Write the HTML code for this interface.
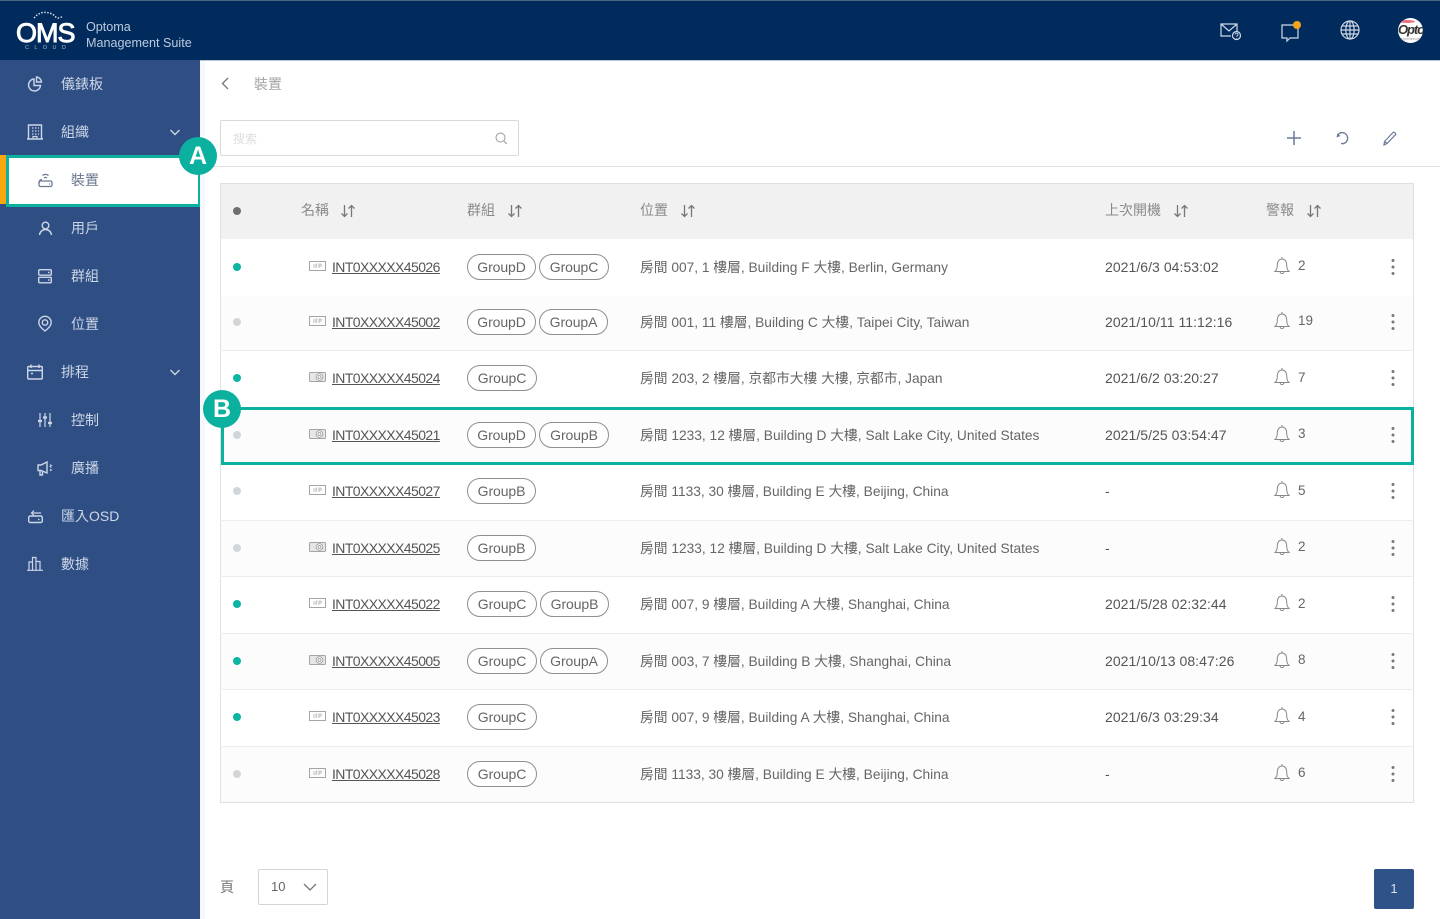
<!DOCTYPE html>
<html lang="zh-Hant"><head><meta charset="utf-8"><title>OMS</title>
<style>
*{box-sizing:border-box}
html,body{margin:0;padding:0;width:1440px;height:919px;overflow:hidden;background:#fff;font-family:"Liberation Sans","Noto Sans CJK TC",sans-serif;color:#555}
div,span,svg,a{position:absolute;white-space:nowrap}
svg{overflow:visible;fill:none}
.nav{color:#cdd6e6;font-size:14px;line-height:20px;height:20px;letter-spacing:0}
.ic{stroke:#cdd6e6;stroke-width:1.4;fill:none}
.h{font-size:14px;line-height:20px;color:#8a8a8a;top:200px}
.sep{left:220px;width:1194px;height:1px;background:#eceeee}
.d{width:8px;height:8px;border-radius:50%;left:233px}
.on{background:#0db5a5}.off{background:#d3d6d8}
.n{left:332px;font-size:14px;line-height:20px;color:#555;text-decoration:underline;letter-spacing:-.58px}
.p{height:26px;border:1px solid #8f8f8f;border-radius:13px;font-size:14px;line-height:24px;text-align:center;color:#666;background:#fff;letter-spacing:-.1px}
.l{left:640px;font-size:13.75px;line-height:20px;color:#666;margin-top:1px}
.t{left:1105px;font-size:14px;line-height:20px;color:#555;letter-spacing:.05px}
.c{left:1298px;font-size:13.5px;line-height:20px;color:#666;margin-top:1px}
.b{left:1274px;width:16px;height:18px;stroke:#888;stroke-width:1;margin-top:-1px}
.k{left:1391px;width:4px;height:18px}
.i{left:309px;width:17px;height:10px}
.so{width:16px;height:14px;stroke:#777;stroke-width:1.3;top:204px}
.badge{width:38px;height:38px;border-radius:50%;background:#0bb09f;color:#fff;font-size:25px;font-weight:bold;line-height:38px;text-align:center}
</style></head><body>
<svg width="0" height="0" style="left:0;top:0"><defs>
<symbol id="bell" viewBox="0 0 16 18"><path d="M8 0v2M1 14.500c1.800-1.500 2.300-3.500 2.300-6.500 0-3.500 1.800-6 4.700-6s4.700 2.500 4.700 6c0 3 .5 5 2.300 6.500zM6 14.500c.3 2.700 3.700 2.700 4 0" fill="none"/></symbol>
<symbol id="dots" viewBox="0 0 4 18"><circle cx="2" cy="2.500" r="1.500" fill="#777"/><circle cx="2" cy="9" r="1.500" fill="#777"/><circle cx="2" cy="15.500" r="1.500" fill="#777"/></symbol>
<symbol id="ifp" viewBox="0 0 17 10"><rect x=".5" y=".5" width="16" height="9" fill="none" stroke="#a5a5a5"/><path d="M5 3v4M7 3v4M7 3h1.500M7 5h1.300M10 3v4M10 3h1.200a1 1 0 0 1 0 2.200H10" fill="none" stroke="#a5a5a5" stroke-width=".7"/></symbol>
<symbol id="cam" viewBox="0 0 17 10"><rect x=".5" y=".5" width="16" height="9" rx="1" fill="#e6e6e6" stroke="#a5a5a5"/><circle cx="10.500" cy="5" r="3.400" fill="#f6f6f6" stroke="#999" stroke-width=".8"/><circle cx="10.500" cy="5" r="1.500" fill="none" stroke="#999" stroke-width=".8"/></symbol>
<symbol id="sort" viewBox="0 0 16 14"><path d="M4.500 1v11.500M1.500 9.500l3 3 3-3M11.500 13V1.500M8.500 4.500l3-3 3 3" fill="none"/></symbol>
</defs></svg>

<!-- header -->
<div style="left:0;top:0;width:1440px;height:60px;background:#012b5d;border-top:1px solid #4c6583"></div>
<div style="left:16px;top:18px;color:#fff;font-size:27px;letter-spacing:-1px;line-height:30px;-webkit-text-stroke:.9px #fff">OMS</div>
<svg style="left:33px;top:11px" width="32" height="11"><path d="M1 7C6 1 12 0 19 3c3 1.500 4 4 6 4 1.500 0 3-.5 4-1.500" stroke="#d8dfe9" stroke-width="1.500" stroke-dasharray="1.500 1.500"/></svg>
<div style="left:25px;top:45px;color:#a9bad0;font-size:5.500px;line-height:7px;letter-spacing:5.400px">CLOUD</div>
<div style="left:86px;top:19px;color:#bdcade;font-size:12.600px;line-height:16px">Optoma<br>Management Suite</div>
<svg style="left:1220px;top:22px" width="23" height="20" stroke="#cfd9e6" stroke-width="1.200"><path d="M11 14H1V2h16v7M1 2l8 7 8-7"/><circle cx="16.500" cy="13.500" r="4" fill="#012b5d"/><path d="M15 12.500a1.500 1.500 0 1 1 2 1.500l-.5.800M16.500 16v.4" stroke-width=".9"/></svg>
<svg style="left:1281px;top:22px" width="22" height="20" stroke="#cfd9e6" stroke-width="1.200"><path d="M1 3h16v13h-8l-3 3v-3H1z"/><circle cx="16" cy="3" r="4" fill="#f5a316" stroke="none"/></svg>
<svg style="left:1340px;top:20px" width="20" height="20" stroke="#cfd9e6" stroke-width="1.200"><circle cx="10" cy="10" r="9"/><ellipse cx="10" cy="10" rx="4.200" ry="9"/><path d="M10 1v18M1 10h18M2.200 6h15.600M2.200 14h15.600"/></svg>
<div style="left:1398px;top:18px;width:25px;height:25px;border-radius:50%;background:#fff;overflow:hidden">
<div style="left:1px;top:2px;width:16px;height:3px;background:#e8707e;border-radius:50%"></div>
<div style="left:0;top:4px;color:#333;font-size:13px;font-weight:bold;font-style:italic;line-height:15px;letter-spacing:-1.100px">Optoma</div>
<div style="left:2px;top:18px;color:#999;font-size:4px;line-height:5px">experience</div></div>

<!-- sidebar -->
<div style="left:0;top:60px;width:200px;height:859px;background:#2f4f84"></div>
<svg class="ic" style="left:27px;top:76px" width="16" height="16"><path d="M7 3a6 6 0 1 0 6.500 6.500H7z"/><path d="M9.500 1a5.500 5.500 0 0 1 5 5h-5z"/></svg>
<div class="nav" style="left:61px;top:74px">儀錶板</div>
<svg class="ic" style="left:27px;top:124px" width="16" height="16"><path d="M1.500 1h13v14h-13zM0 15h16"/><path d="M5 4h1.500M8 4h1.500M11 4h1M5 7h1.500M8 7h1.500M11 7h1M5 10h1.500M8 10h1.500M11 10h1M6 15v-2.500h4V15" stroke-width="1.200"/></svg>
<div class="nav" style="left:61px;top:122px">組織</div>
<svg class="ic" style="left:170px;top:129px" width="10" height="7" stroke-width="1.500"><path d="M.500 1l4.500 4.500L9.500 1"/></svg>

<div style="left:0;top:155px;width:6px;height:49px;background:#f8a70c"></div>
<div style="left:6px;top:155px;width:194px;height:52px;background:#fff;border:3px solid #0bb09f;border-right-width:2px"></div>
<svg style="left:38px;top:172px;stroke:#6a7a96;stroke-width:1.300" width="15" height="16"><path d="M4.500 3.500c1.500-1.500 4.500-1.500 6 0M6 6c.8-.8 2.200-.8 3 0"/><rect x="1" y="9" width="13" height="5.500" rx="1.500"/><path d="M1 11.500c0-3 1-4 3-4M11 12h1" /></svg>
<div class="nav" style="left:71px;top:170px;color:#68758c">裝置</div>

<svg class="ic" style="left:38px;top:221px" width="15" height="15"><circle cx="7.500" cy="4.500" r="3.300"/><path d="M1.500 14c.5-3.500 3-5.500 6-5.500s5.500 2 6 5.500"/></svg>
<div class="nav" style="left:71px;top:218px">用戶</div>
<svg class="ic" style="left:38px;top:269px" width="14" height="15"><rect x=".7" y=".7" width="12.600" height="5.500" rx="1"/><rect x=".7" y="8.300" width="12.600" height="5.500" rx="1"/><path d="M10 3.500h1.500M10 11h1.500"/></svg>
<div class="nav" style="left:71px;top:266px">群組</div>
<svg class="ic" style="left:38px;top:316px" width="14" height="16"><path d="M7 15C3 12 .8 9.500.8 6.500a6.200 6.200 0 0 1 12.400 0C13.200 9.500 11 12 7 15z"/><circle cx="7" cy="6.500" r="2.700"/></svg>
<div class="nav" style="left:71px;top:314px">位置</div>
<svg class="ic" style="left:27px;top:364px" width="16" height="16"><rect x=".7" y="2.500" width="14.600" height="12.500" rx="1"/><path d="M.7 6.500h14.600M4 .5v3.500M12 .5v3.500M4 9.500h2"/></svg>
<div class="nav" style="left:61px;top:362px">排程</div>
<svg class="ic" style="left:170px;top:369px" width="10" height="7" stroke-width="1.500"><path d="M.500 1l4.500 4.500L9.500 1"/></svg>
<svg class="ic" style="left:38px;top:413px" width="14" height="14"><path d="M2 0v14M7 0v14M12 0v14" stroke-width="1.200"/><path d="M0 8h4M5 4.500h4M10 10h4" stroke-width="2.200"/></svg>
<div class="nav" style="left:71px;top:410px">控制</div>
<svg class="ic" style="left:37px;top:461px" width="18" height="15"><path d="M1 4h3l6-3v11L4 9.500H1zM3 9.500V14h2.500V10.500"/><path d="M13 3.500l1.500 1-1.500 1 1.500 1M13 8l1.500 1-1.500 1" stroke-width="1"/></svg>
<div class="nav" style="left:71px;top:458px">廣播</div>
<svg class="ic" style="left:28px;top:509px" width="15" height="15"><rect x=".7" y="7" width="13.600" height="6.500" rx="1.500"/><path d="M4 4h9M6 1.500L3.500 4 6 6.500M10 10.500h1.500" stroke-width="1.200"/></svg>
<div class="nav" style="left:61px;top:506px">匯入OSD</div>
<svg class="ic" style="left:27px;top:556px" width="16" height="15"><path d="M0 14.300h16M2 14V6h3.500v8M5.500 14V1.500H9V14M9 14V5.500h4V14" stroke-width="1.200"/></svg>
<div class="nav" style="left:61px;top:554px">數據</div>

<!-- content top -->
<div style="left:200px;top:60px;width:5px;height:859px;background:#f6f8fe"></div>
<div style="left:200px;top:60px;width:1240px;height:1px;background:#b9c6d3"></div>
<svg style="left:221px;top:77px;stroke:#777;stroke-width:1.300" width="8" height="13"><path d="M7 1L1.500 6.500 7 12"/></svg>
<div style="left:254px;top:74px;font-size:14px;line-height:20px;color:#a3a3a3">裝置</div>
<div style="left:220px;top:120px;width:299px;height:36px;border:1px solid #d9d9d9;border-radius:2px;background:#fff"></div>
<div style="left:233px;top:131px;font-size:12px;line-height:17px;color:#dedede">搜索</div>
<svg style="left:495px;top:132px;stroke:#999;stroke-width:1" width="12" height="13"><circle cx="5.500" cy="5.500" r="4.500"/><path d="M9 9l2.800 3"/></svg>
<div style="left:200px;top:166px;width:1240px;height:1px;background:#dfdfdf"></div>
<svg style="left:1287px;top:131px;stroke:#6c7b98;stroke-width:1.500" width="14" height="14"><path d="M7 0v14M0 7h14"/></svg>
<svg style="left:1335px;top:131px;stroke:#6c7b98;stroke-width:1.400" width="15" height="15"><path d="M2.800 3.800A5.500 5.500 0 1 1 6 12.500"/><path d="M1.500 6.500L2.300 2.300 5.500 5z" fill="#6c7b98" stroke="none"/></svg>
<svg style="left:1383px;top:131px;stroke:#6c7b98;stroke-width:1.200" width="14" height="15"><path d="M1.500 10.500L10 1.500c1-1 3.500 1 2.500 2.200L4 12.500l-3 1.500zM1.500 10.500l2.500 2"/></svg>

<!-- table -->
<div style="left:220px;top:183px;width:1194px;height:620px;border:1px solid #dfe1e1;background:#fff"></div>
<div style="left:221px;top:184px;width:1192px;height:55px;background:#f1f1f1"></div>
<div class="d" style="left:233px;top:207px;background:#707070"></div>
<div class="h" style="left:301px">名稱</div><svg class="so" style="left:340px"><use href="#sort" width="16" height="14"/></svg>
<div class="h" style="left:467px">群組</div><svg class="so" style="left:507px"><use href="#sort" width="16" height="14"/></svg>
<div class="h" style="left:640px">位置</div><svg class="so" style="left:680px"><use href="#sort" width="16" height="14"/></svg>
<div class="h" style="left:1105px">上次開機</div><svg class="so" style="left:1173px"><use href="#sort" width="16" height="14"/></svg>
<div class="h" style="left:1266px">警報</div><svg class="so" style="left:1306px"><use href="#sort" width="16" height="14"/></svg>

<div style="left:221px;top:296px;width:1192px;height:54px;background:#fcfcfc"></div>
<div style="left:221px;top:408px;width:1192px;height:55px;background:#fcfcfc"></div>
<div style="left:221px;top:521px;width:1192px;height:55px;background:#fcfcfc"></div>
<div style="left:221px;top:634px;width:1192px;height:55px;background:#fcfcfc"></div>
<div style="left:221px;top:747px;width:1192px;height:55px;background:#fcfcfc"></div>
<div class="sep" style="top:350px"></div><div class="sep" style="top:520px"></div><div class="sep" style="top:576px"></div><div class="sep" style="top:633px"></div><div class="sep" style="top:689px"></div><div class="sep" style="top:746px"></div>

<!-- row 1 -->
<div class="d on" style="top:263px"></div><svg class="i" style="top:261px"><use href="#ifp" width="17" height="10"/></svg><div class="n" style="top:257px">INT0XXXXX45026</div>
<div class="p" style="left:467px;top:254px;width:69px">GroupD</div><div class="p" style="left:539px;top:254px;width:70px">GroupC</div>
<div class="l" style="top:257px">房間 007, 1 樓層, Building F 大樓, Berlin, Germany</div><div class="t" style="top:257px">2021/6/3 04:53:02</div>
<svg class="b" style="top:258px"><use href="#bell" width="16" height="18"/></svg><div class="c" style="top:255px">2</div><svg class="k" style="top:258px"><use href="#dots" width="4" height="18"/></svg>
<!-- row 2 -->
<div class="d off" style="top:318px"></div><svg class="i" style="top:316px"><use href="#ifp" width="17" height="10"/></svg><div class="n" style="top:312px">INT0XXXXX45002</div>
<div class="p" style="left:467px;top:309px;width:69px">GroupD</div><div class="p" style="left:539px;top:309px;width:69px">GroupA</div>
<div class="l" style="top:312px">房間 001, 11 樓層, Building C 大樓, Taipei City, Taiwan</div><div class="t" style="top:312px">2021/10/11 11:12:16</div>
<svg class="b" style="top:313px"><use href="#bell" width="16" height="18"/></svg><div class="c" style="top:310px">19</div><svg class="k" style="top:313px"><use href="#dots" width="4" height="18"/></svg>
<!-- row 3 -->
<div class="d on" style="top:374px"></div><svg class="i" style="top:372px"><use href="#cam" width="17" height="10"/></svg><div class="n" style="top:368px">INT0XXXXX45024</div>
<div class="p" style="left:467px;top:365px;width:70px">GroupC</div>
<div class="l" style="top:368px">房間 203, 2 樓層, 京都市大樓 大樓, 京都市, Japan</div><div class="t" style="top:368px">2021/6/2 03:20:27</div>
<svg class="b" style="top:369px"><use href="#bell" width="16" height="18"/></svg><div class="c" style="top:367px">7</div><svg class="k" style="top:369px"><use href="#dots" width="4" height="18"/></svg>
<!-- row 4 -->
<div class="d off" style="top:431px"></div><svg class="i" style="top:429px"><use href="#cam" width="17" height="10"/></svg><div class="n" style="top:425px">INT0XXXXX45021</div>
<div class="p" style="left:467px;top:422px;width:69px">GroupD</div><div class="p" style="left:539px;top:422px;width:70px">GroupB</div>
<div class="l" style="top:425px">房間 1233, 12 樓層, Building D 大樓, Salt Lake City, United States</div><div class="t" style="top:425px">2021/5/25 03:54:47</div>
<svg class="b" style="top:426px"><use href="#bell" width="16" height="18"/></svg><div class="c" style="top:423px">3</div><svg class="k" style="top:426px"><use href="#dots" width="4" height="18"/></svg>
<!-- row 5 -->
<div class="d off" style="top:487px"></div><svg class="i" style="top:485px"><use href="#ifp" width="17" height="10"/></svg><div class="n" style="top:481px">INT0XXXXX45027</div>
<div class="p" style="left:467px;top:478px;width:69px">GroupB</div>
<div class="l" style="top:481px">房間 1133, 30 樓層, Building E 大樓, Beijing, China</div><div class="t" style="top:481px">-</div>
<svg class="b" style="top:482px"><use href="#bell" width="16" height="18"/></svg><div class="c" style="top:480px">5</div><svg class="k" style="top:482px"><use href="#dots" width="4" height="18"/></svg>
<!-- row 6 -->
<div class="d off" style="top:544px"></div><svg class="i" style="top:542px"><use href="#cam" width="17" height="10"/></svg><div class="n" style="top:538px">INT0XXXXX45025</div>
<div class="p" style="left:467px;top:535px;width:69px">GroupB</div>
<div class="l" style="top:538px">房間 1233, 12 樓層, Building D 大樓, Salt Lake City, United States</div><div class="t" style="top:538px">-</div>
<svg class="b" style="top:539px"><use href="#bell" width="16" height="18"/></svg><div class="c" style="top:536px">2</div><svg class="k" style="top:539px"><use href="#dots" width="4" height="18"/></svg>
<!-- row 7 -->
<div class="d on" style="top:600px"></div><svg class="i" style="top:598px"><use href="#ifp" width="17" height="10"/></svg><div class="n" style="top:594px">INT0XXXXX45022</div>
<div class="p" style="left:467px;top:591px;width:70px">GroupC</div><div class="p" style="left:540px;top:591px;width:69px">GroupB</div>
<div class="l" style="top:594px">房間 007, 9 樓層, Building A 大樓, Shanghai, China</div><div class="t" style="top:594px">2021/5/28 02:32:44</div>
<svg class="b" style="top:595px"><use href="#bell" width="16" height="18"/></svg><div class="c" style="top:593px">2</div><svg class="k" style="top:595px"><use href="#dots" width="4" height="18"/></svg>
<!-- row 8 -->
<div class="d on" style="top:657px"></div><svg class="i" style="top:655px"><use href="#cam" width="17" height="10"/></svg><div class="n" style="top:651px">INT0XXXXX45005</div>
<div class="p" style="left:467px;top:648px;width:70px">GroupC</div><div class="p" style="left:540px;top:648px;width:68px">GroupA</div>
<div class="l" style="top:651px">房間 003, 7 樓層, Building B 大樓, Shanghai, China</div><div class="t" style="top:651px">2021/10/13 08:47:26</div>
<svg class="b" style="top:652px"><use href="#bell" width="16" height="18"/></svg><div class="c" style="top:649px">8</div><svg class="k" style="top:652px"><use href="#dots" width="4" height="18"/></svg>
<!-- row 9 -->
<div class="d on" style="top:713px"></div><svg class="i" style="top:711px"><use href="#ifp" width="17" height="10"/></svg><div class="n" style="top:707px">INT0XXXXX45023</div>
<div class="p" style="left:467px;top:704px;width:70px">GroupC</div>
<div class="l" style="top:707px">房間 007, 9 樓層, Building A 大樓, Shanghai, China</div><div class="t" style="top:707px">2021/6/3 03:29:34</div>
<svg class="b" style="top:708px"><use href="#bell" width="16" height="18"/></svg><div class="c" style="top:706px">4</div><svg class="k" style="top:708px"><use href="#dots" width="4" height="18"/></svg>
<!-- row 10 -->
<div class="d off" style="top:770px"></div><svg class="i" style="top:768px"><use href="#ifp" width="17" height="10"/></svg><div class="n" style="top:764px">INT0XXXXX45028</div>
<div class="p" style="left:467px;top:761px;width:70px">GroupC</div>
<div class="l" style="top:764px">房間 1133, 30 樓層, Building E 大樓, Beijing, China</div><div class="t" style="top:764px">-</div>
<svg class="b" style="top:765px"><use href="#bell" width="16" height="18"/></svg><div class="c" style="top:762px">6</div><svg class="k" style="top:765px"><use href="#dots" width="4" height="18"/></svg>

<!-- highlight B -->
<div style="left:221px;top:407px;width:1193px;height:58px;border:3px solid #0bb09f"></div>
<div class="badge" style="left:203px;top:390px">B</div>
<div class="badge" style="left:179px;top:137px">A</div>

<!-- footer -->
<div style="left:220px;top:877px;font-size:14px;line-height:20px;color:#777">頁</div>
<div style="left:258px;top:869px;width:70px;height:36px;border:1px solid #d5d5d5;border-radius:2px;background:#fff"></div>
<div style="left:271px;top:878px;font-size:13px;line-height:18px;color:#666">10</div>
<svg style="left:303px;top:883px;stroke:#777;stroke-width:1.300" width="14" height="9"><path d="M1 1l6 6 6-6"/></svg>
<div style="left:1374px;top:869px;width:40px;height:40px;background:#2f5289;border-radius:2px;color:#d8e0ec;font-size:13px;line-height:40px;text-align:center">1</div>
</body></html>
